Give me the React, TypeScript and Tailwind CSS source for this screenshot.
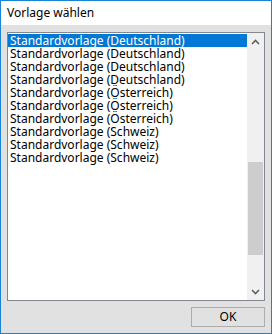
import React from "react";

const items = [
  "Standardvorlage (Deutschland)",
  "Standardvorlage (Deutschland)",
  "Standardvorlage (Deutschland)",
  "Standardvorlage (Deutschland)",
  "Standardvorlage (Österreich)",
  "Standardvorlage (Österreich)",
  "Standardvorlage (Österreich)",
  "Standardvorlage (Schweiz)",
  "Standardvorlage (Schweiz)",
  "Standardvorlage (Schweiz)",
];

function Chevron({ up }: { up?: boolean }) {
  return (
    <svg width="9" height="6" viewBox="0 0 9 6">
      <path
        d={up ? "M1 5 L4.5 1.5 L8 5" : "M1 1 L4.5 4.5 L8 1"}
        fill="none"
        stroke="#606060"
        strokeWidth="1.6"
      />
    </svg>
  );
}

export default function App() {
  return (
    <div
      className="w-[272px] h-[334px] border border-[#1883d7] bg-[#e1e1e1] flex flex-col text-black"
      style={{ fontFamily: '"Noto Sans", "Open Sans", sans-serif' }}
    >
      <div className="h-[24px] bg-white flex items-center pl-[6px] text-[12px] leading-[14px]">
        Vorlage wählen
      </div>
      <div className="flex-1 flex flex-col px-[6px] pt-[7px] pb-[6px]">
        <div className="h-[269px] border border-[#828790] bg-white flex">
          <div className="flex-1 pt-[1px] flex flex-col">
            {items.map((t, i) => (
              <div
                key={i}
                className={
                  "h-[13px] pl-[2px] text-[12px] leading-[13px] whitespace-nowrap " +
                  (i === 0 ? "bg-[#0078d7] text-white" : "")
                }
              >
                {t}
              </div>
            ))}
          </div>
          <div className="w-[17px] bg-[#f0f0f0] flex flex-col">
            <div className="h-[17px] flex items-center justify-center">
              <Chevron up />
            </div>
            <div className="flex-1 flex flex-col px-[1px]">
              <div className="h-[112px]" />
              <div className="h-[93px] bg-[#cdcdcd]" />
            </div>
            <div className="h-[17px] flex items-center justify-center">
              <Chevron />
            </div>
          </div>
        </div>
        <div className="flex justify-end mt-[6px]">
          <div className="w-[74px] h-[20px] border border-[#adadad] bg-[#e1e1e1] flex items-center justify-center text-[12px] leading-[14px]">
            OK
          </div>
        </div>
      </div>
    </div>
  );
}
